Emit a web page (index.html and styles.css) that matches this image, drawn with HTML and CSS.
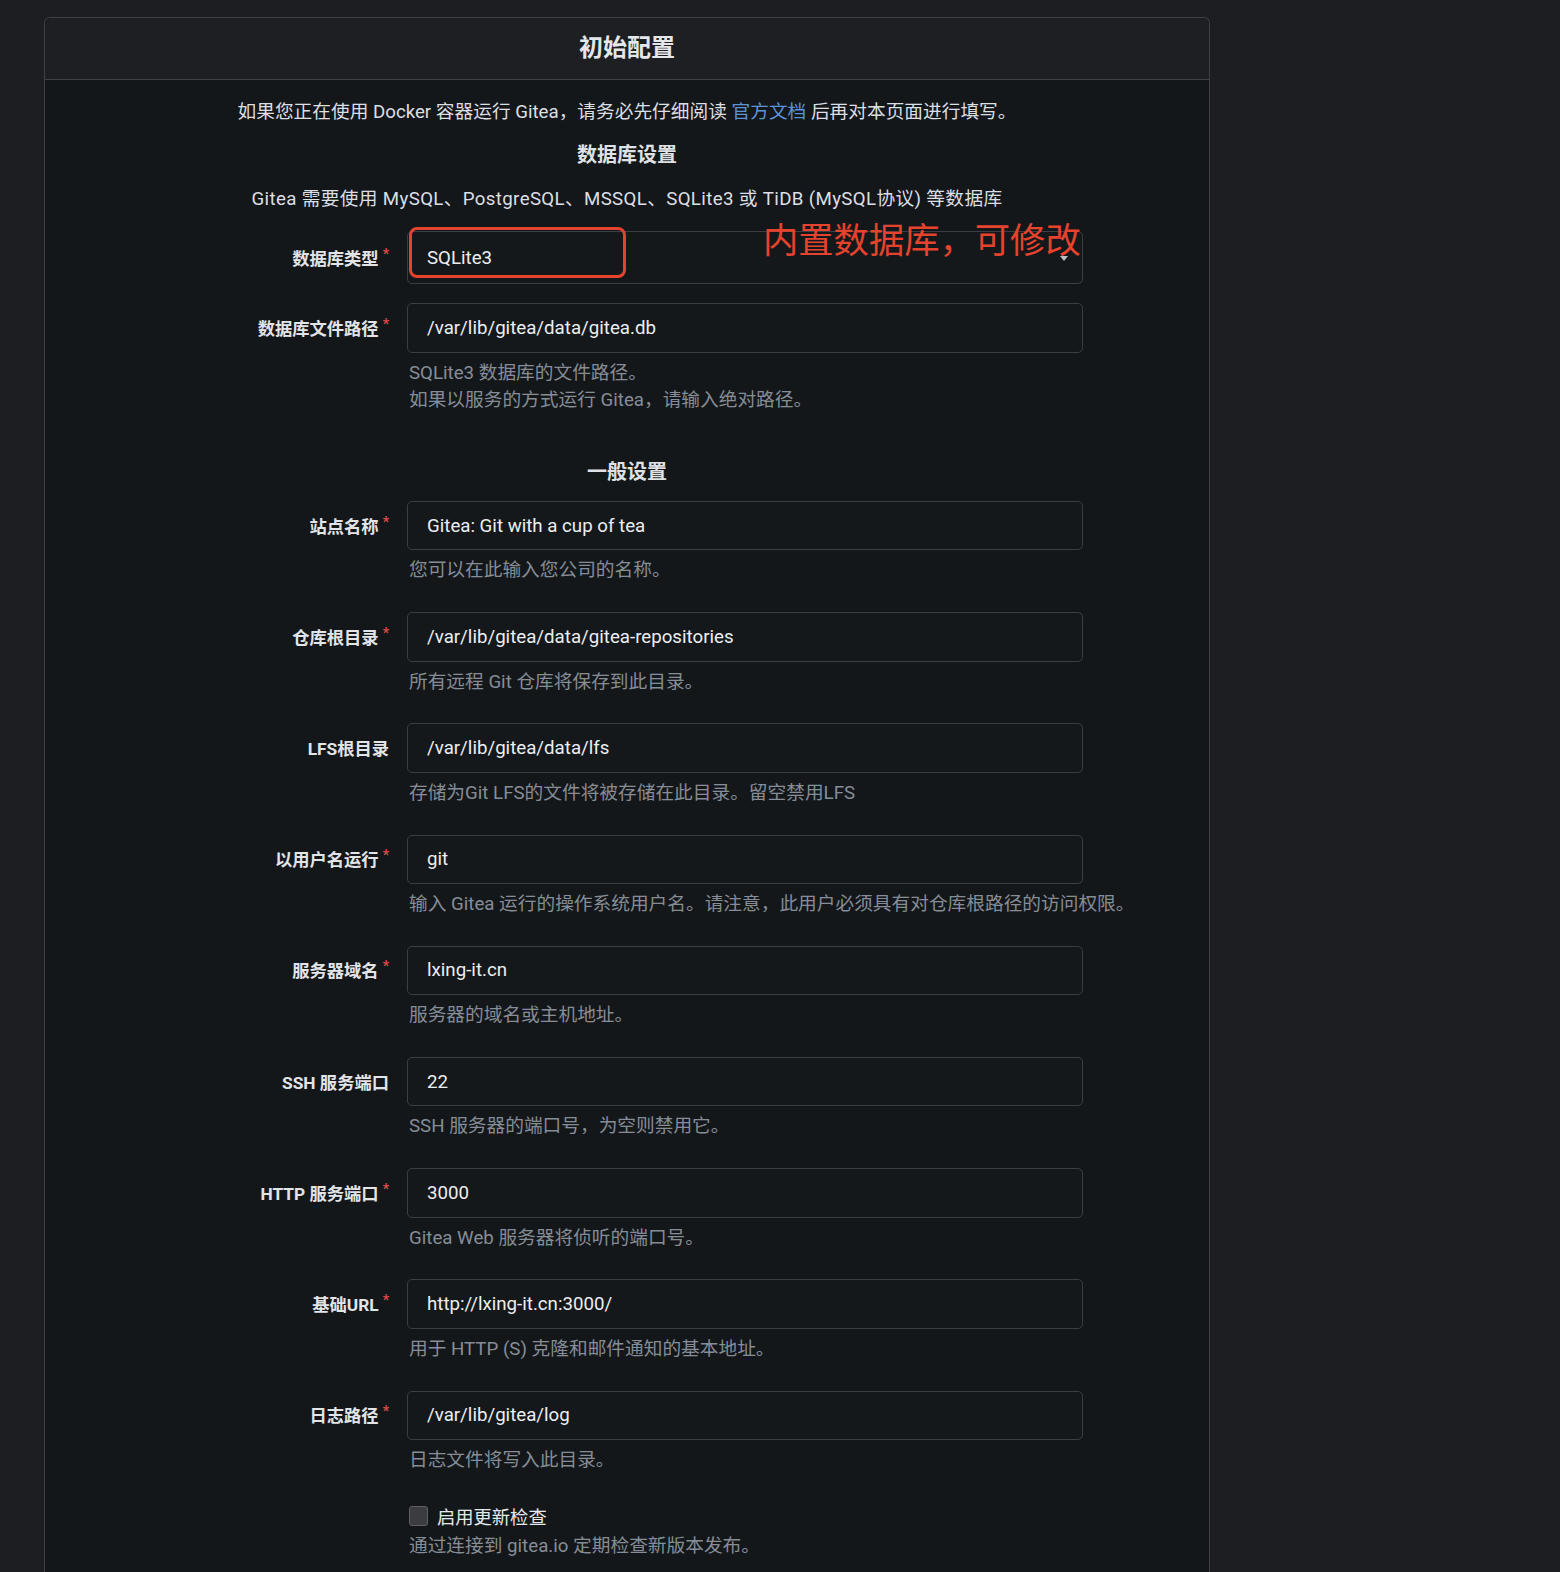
FILE: index.html
```html
<!DOCTYPE html>
<html lang="zh-CN">
<head>
    <meta charset="UTF-8">
    <meta name="viewport" content="width=device-width, initial-scale=1.0">
    <title>安装页面 - Gitea</title>
    <link rel="stylesheet" href="styles.css">
</head>
<body>
    <div class="install">
        <div class="card">
            <h3 class="card-header">初始配置</h3>
            <form class="card-body" onsubmit="return false">
                <p class="intro">如果您正在使用 Docker 容器运行 Gitea，请务必先仔细阅读 <a href="#">官方文档</a> 后再对本页面进行填写。</p>

                <h4 class="section-title">数据库设置</h4>
                <p class="db-note">Gitea 需要使用 MySQL、PostgreSQL、MSSQL、SQLite3 或 TiDB (MySQL协议) 等数据库</p>

                <div class="field required db-type">
                    <label>数据库类型</label>
                    <div class="control">
                        <div class="select">
                            <span class="select-text">SQLite3</span>
                            <span class="caret"></span>
                        </div>
                        <!-- screenshot annotation -->
                        <span class="mark-box"></span>
                        <span class="mark-text">内置数据库，可修改</span>
                    </div>
                </div>

                <div class="field required">
                    <label>数据库文件路径</label>
                    <div class="control"><input type="text" value="/var/lib/gitea/data/gitea.db"></div>
                    <div class="help">SQLite3 数据库的文件路径。<br>如果以服务的方式运行 Gitea，请输入绝对路径。</div>
                </div>

                <h4 class="section-title general">一般设置</h4>

                <div class="field required">
                    <label>站点名称</label>
                    <div class="control"><input type="text" value="Gitea: Git with a cup of tea"></div>
                    <div class="help">您可以在此输入您公司的名称。</div>
                </div>
                <div class="field required">
                    <label>仓库根目录</label>
                    <div class="control"><input type="text" value="/var/lib/gitea/data/gitea-repositories"></div>
                    <div class="help">所有远程 Git 仓库将保存到此目录。</div>
                </div>
                <div class="field">
                    <label>LFS根目录</label>
                    <div class="control"><input type="text" value="/var/lib/gitea/data/lfs"></div>
                    <div class="help">存储为Git LFS的文件将被存储在此目录。留空禁用LFS</div>
                </div>
                <div class="field required">
                    <label>以用户名运行</label>
                    <div class="control"><input type="text" value="git"></div>
                    <div class="help">输入 Gitea 运行的操作系统用户名。请注意，此用户必须具有对仓库根路径的访问权限。</div>
                </div>
                <div class="field required">
                    <label>服务器域名</label>
                    <div class="control"><input type="text" value="lxing-it.cn"></div>
                    <div class="help">服务器的域名或主机地址。</div>
                </div>
                <div class="field">
                    <label>SSH 服务端口</label>
                    <div class="control"><input type="text" value="22"></div>
                    <div class="help">SSH 服务器的端口号，为空则禁用它。</div>
                </div>
                <div class="field required">
                    <label>HTTP 服务端口</label>
                    <div class="control"><input type="text" value="3000"></div>
                    <div class="help">Gitea Web 服务器将侦听的端口号。</div>
                </div>
                <div class="field required">
                    <label>基础URL</label>
                    <div class="control"><input type="text" value="http://lxing-it.cn:3000/"></div>
                    <div class="help">用于 HTTP (S) 克隆和邮件通知的基本地址。</div>
                </div>
                <div class="field required">
                    <label>日志路径</label>
                    <div class="control"><input type="text" value="/var/lib/gitea/log"></div>
                    <div class="help">日志文件将写入此目录。</div>
                </div>

                <div class="check-field">
                    <label class="checkbox"><input type="checkbox"><span>启用更新检查</span></label>
                    <div class="help">通过连接到 gitea.io 定期检查新版本发布。</div>
                </div>
            </form>
        </div>
    </div>
</body>
</html>
```

FILE: styles.css
```css
html, body {
    margin: 0;
    background-color: #1c1e22;
    color: #e0e2e6;
    font-family: Roboto, "Noto Sans CJK SC", sans-serif;
}
.install {
    padding: 17px 0 0 44px;
    height: 1555px;
    overflow: hidden;
}
.card {
    width: 1164px;
    border: 1px solid #3c4047;
    border-bottom: none;
    border-radius: 6px 6px 0 0;
    background-color: #14171a;
    min-height: 1600px;
}
.card-header {
    margin: 0;
    height: 61px;
    line-height: 61px;
    text-align: center;
    font-size: 24px;
    font-weight: bold;
    color: #e4e6ea;
    background-color: #1e1f22;
    border-bottom: 1px solid #3c4047;
    border-radius: 6px 6px 0 0;
}
.card-body {
    padding-top: 18px;
    font-size: 18.7px;
}
.intro, .db-note {
    margin: 0;
    text-align: center;
    line-height: 28px;
    color: #dcdfe3;
}
.intro a {
    color: #5b93db;
    text-decoration: none;
}
.db-note {
    margin-top: 16px;
    letter-spacing: 0.35px;
}
.section-title {
    margin: 15px 0 0;
    text-align: center;
    line-height: 28px;
    font-size: 20px;
    font-weight: bold;
    color: #dfe1e5;
}
.section-title.general {
    margin-top: 44px;
    margin-bottom: 15px;
}

.field {
    display: grid;
    grid-template-columns: 344px 1fr;
    column-gap: 18px;
    align-items: center;
    margin-bottom: 27.5px;
}
.field > label {
    text-align: right;
    font-size: 17.3px;
    font-weight: bold;
    color: #e2e4e8;
    margin-top: -1px;
}
.field.required > label::after {
    content: "*";
    color: #d94a4a;
    font-size: 14px;
    margin-left: 4px;
    vertical-align: 6px;
}
.control {
    position: relative;
    width: 676px;
}
.control input {
    box-sizing: border-box;
    width: 100%;
    height: 49.5px;
    padding: 0 19px;
    font: inherit;
    font-size: 18.7px;
    color: #eceef1;
    background-color: #15181b;
    border: 1px solid #3a3e45;
    border-radius: 5px;
    outline: none;
}
.help {
    grid-column: 2;
    margin-top: 7px;
    padding-left: 2px;
    line-height: 27.2px;
    font-size: 18.7px;
    color: #868d96;
    white-space: nowrap;
}

.db-type {
    margin-top: 18px;
    margin-bottom: 19px;
}
.select {
    box-sizing: border-box;
    height: 53px;
    padding: 0 19px;
    display: flex;
    align-items: center;
    border: 1px solid #3a3e45;
    border-radius: 5px;
    background-color: #15181b;
}
.select-text {
    flex: 1;
    color: #eceef1;
    font-size: 18.7px;
}
.caret {
    width: 0;
    height: 0;
    border-left: 4px solid transparent;
    border-right: 4px solid transparent;
    border-top: 5px solid #b9bdc4;
    margin-right: -5px;
    margin-top: 1px;
}
.mark-box {
    position: absolute;
    left: 2px;
    top: -4px;
    width: 217px;
    height: 51px;
    box-sizing: border-box;
    border: 3.5px solid #e5432d;
    border-radius: 8px;
}
.mark-text {
    position: absolute;
    left: 356px;
    top: -13px;
    font-size: 35.3px;
    line-height: 40px;
    color: #e5432d;
    font-family: "Noto Sans CJK SC", sans-serif;
    white-space: nowrap;
}

.check-field {
    margin-left: 363px;
}
.checkbox {
    display: flex;
    align-items: center;
    height: 28px;
    font-size: 18.3px;
    color: #e6e8eb;
}
.checkbox input {
    appearance: none;
    -webkit-appearance: none;
    margin: 0 9px 0 1px;
    width: 19px;
    height: 20px;
    border: 1px solid #5c6067;
    border-radius: 3px;
    background-color: #3b3c3f;
}
.check-field .help {
    margin-top: 3px;
    padding-left: 1px;
}
```
